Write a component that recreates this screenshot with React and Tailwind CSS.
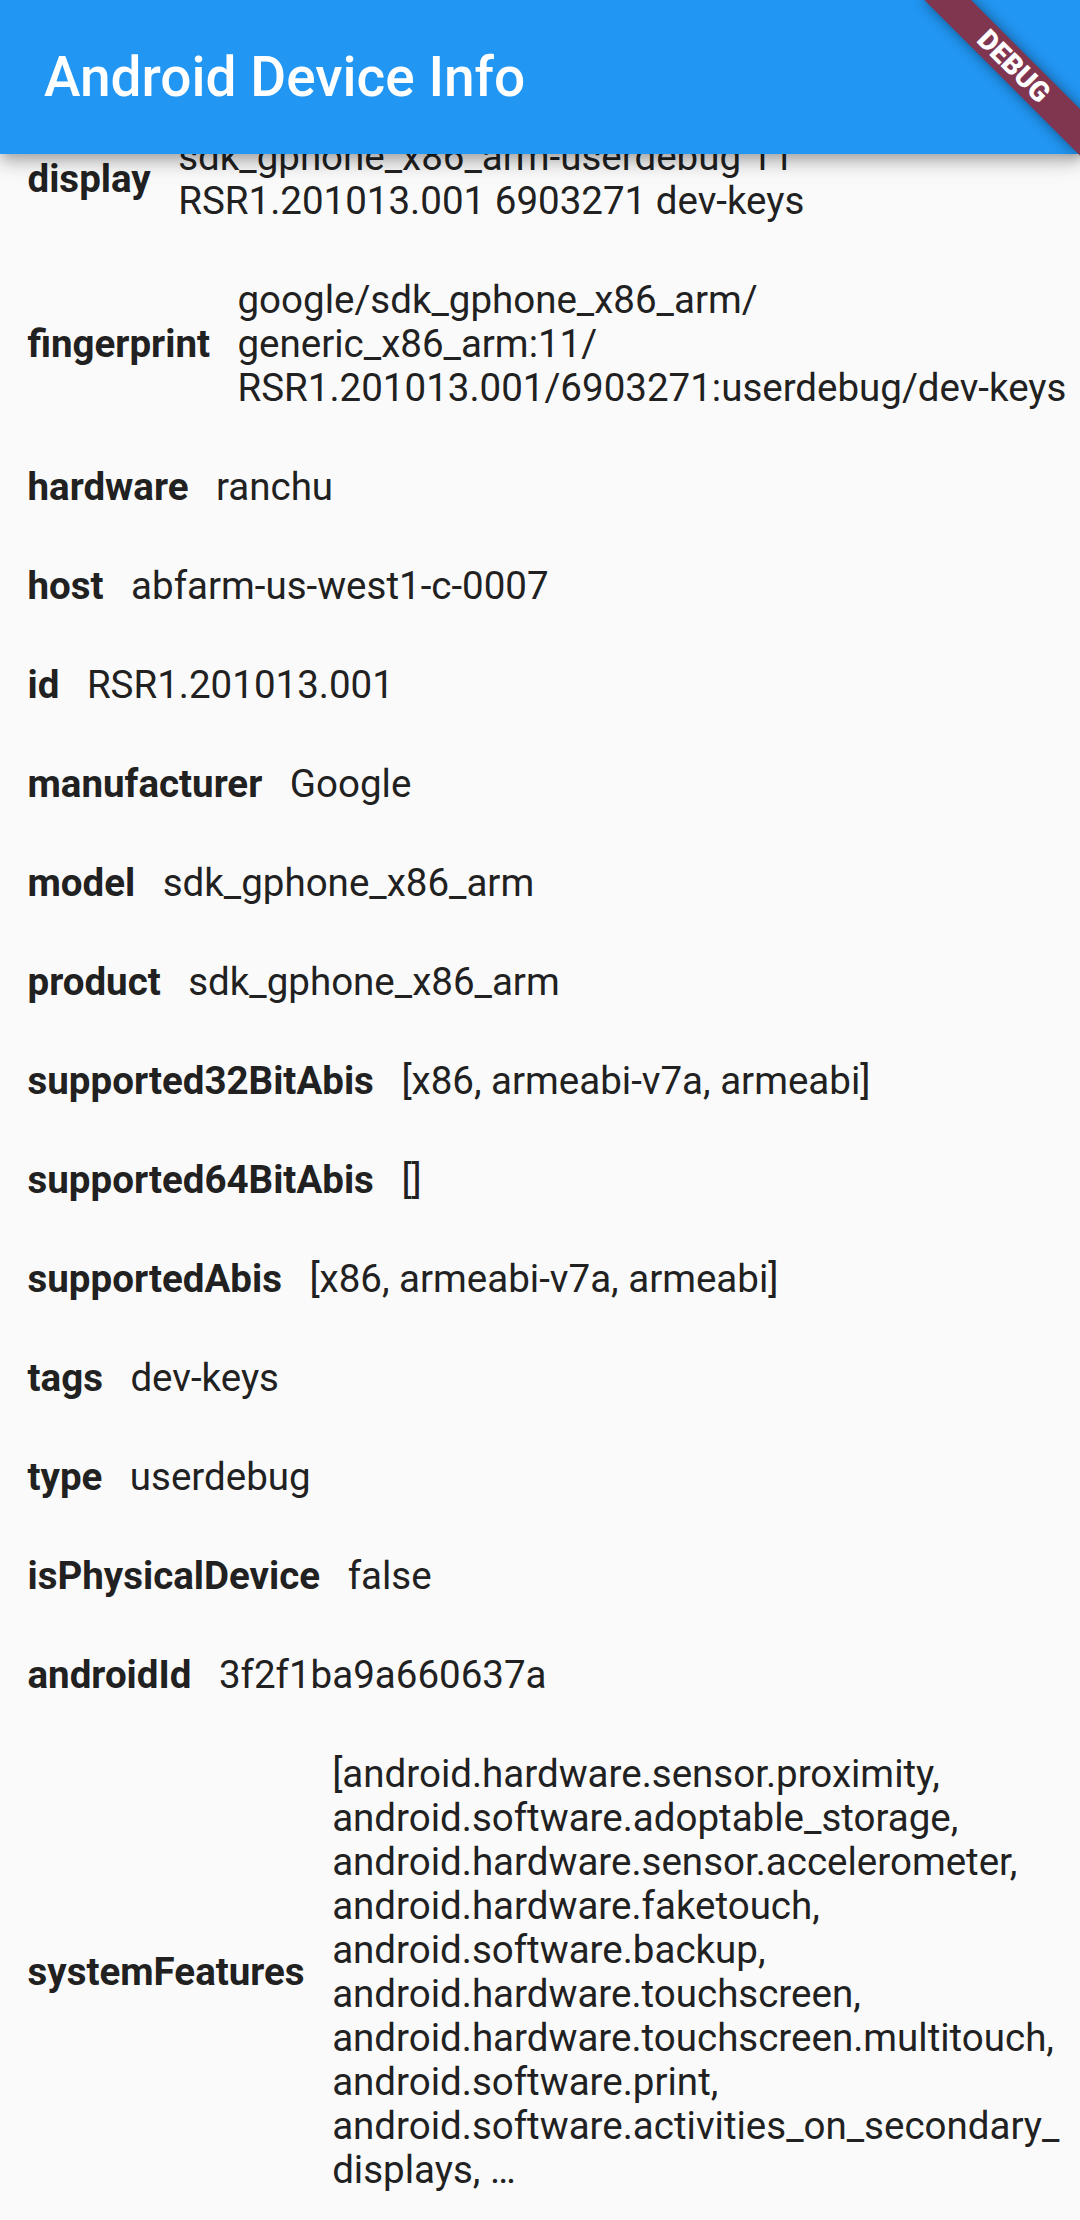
const deviceData = [
  { key: 'display', lines: ['sdk_gphone_x86_arm-userdebug 11', 'RSR1.201013.001 6903271 dev-keys'] },
  {
    key: 'fingerprint',
    lines: ['google/sdk_gphone_x86_arm/', 'generic_x86_arm:11/', 'RSR1.201013.001/6903271:userdebug/dev-keys'],
  },
  { key: 'hardware', lines: ['ranchu'] },
  { key: 'host', lines: ['abfarm-us-west1-c-0007'] },
  { key: 'id', lines: ['RSR1.201013.001'] },
  { key: 'manufacturer', lines: ['Google'] },
  { key: 'model', lines: ['sdk_gphone_x86_arm'] },
  { key: 'product', lines: ['sdk_gphone_x86_arm'] },
  { key: 'supported32BitAbis', lines: ['[x86, armeabi-v7a, armeabi]'] },
  { key: 'supported64BitAbis', lines: ['[]'] },
  { key: 'supportedAbis', lines: ['[x86, armeabi-v7a, armeabi]'] },
  { key: 'tags', lines: ['dev-keys'] },
  { key: 'type', lines: ['userdebug'] },
  { key: 'isPhysicalDevice', lines: ['false'] },
  { key: 'androidId', lines: ['3f2f1ba9a660637a'] },
  {
    key: 'systemFeatures',
    lines: [
      '[android.hardware.sensor.proximity,',
      'android.software.adoptable_storage,',
      'android.hardware.sensor.accelerometer,',
      'android.hardware.faketouch,',
      'android.software.backup,',
      'android.hardware.touchscreen,',
      'android.hardware.touchscreen.multitouch,',
      'android.software.print,',
      'android.software.activities_on_secondary_',
      'displays, \u2026',
    ],
  },
];

const InfoRow = ({ label, lines }) => (
  <div className="flex items-center">
    <div className="shrink-0 p-[27.5px] font-bold">{label}</div>
    <div className="min-w-0 flex-1 py-[27.5px]">
      {lines.map((line, i) => (
        <div key={i} className="whitespace-nowrap">
          {line}
        </div>
      ))}
    </div>
  </div>
);

const DebugBanner = () => (
  <div className="pointer-events-none absolute top-0 right-0 z-20 h-0 w-0">
    <div className="absolute top-[77px] left-[-110px] flex h-[33px] w-[220px] origin-[110px_-77px] rotate-45 items-center justify-center bg-[#813650] shadow-[0_0_14px_rgba(0,0,0,0.45)]">
      <span className="text-[28px] leading-none font-black text-white">DEBUG</span>
    </div>
  </div>
);

export default function App() {
  return (
    <div className="relative h-[2220px] w-[1080px] overflow-hidden bg-[#fafafa] font-[family-name:Roboto,sans-serif] text-[#212121]">
      {/* App bar */}
      <div className="relative z-10 flex h-[154px] items-center bg-[#2196f3] px-[44px] shadow-[0_5px_11px_-3px_rgba(0,0,0,0.2),0_11px_14px_0_rgba(0,0,0,0.14),0_3px_28px_0_rgba(0,0,0,0.12)]">
        <h1 className="text-[55px] leading-none font-medium text-white">Android Device Info</h1>
      </div>

      {/* Scrolled list */}
      <div className="h-[2066px] overflow-hidden">
        <div className="-mt-[46.5px] text-[38.5px] leading-[44px]">
          {deviceData.map((row) => (
            <InfoRow key={row.key} label={row.key} lines={row.lines} />
          ))}
        </div>
      </div>

      <DebugBanner />
    </div>
  );
}
